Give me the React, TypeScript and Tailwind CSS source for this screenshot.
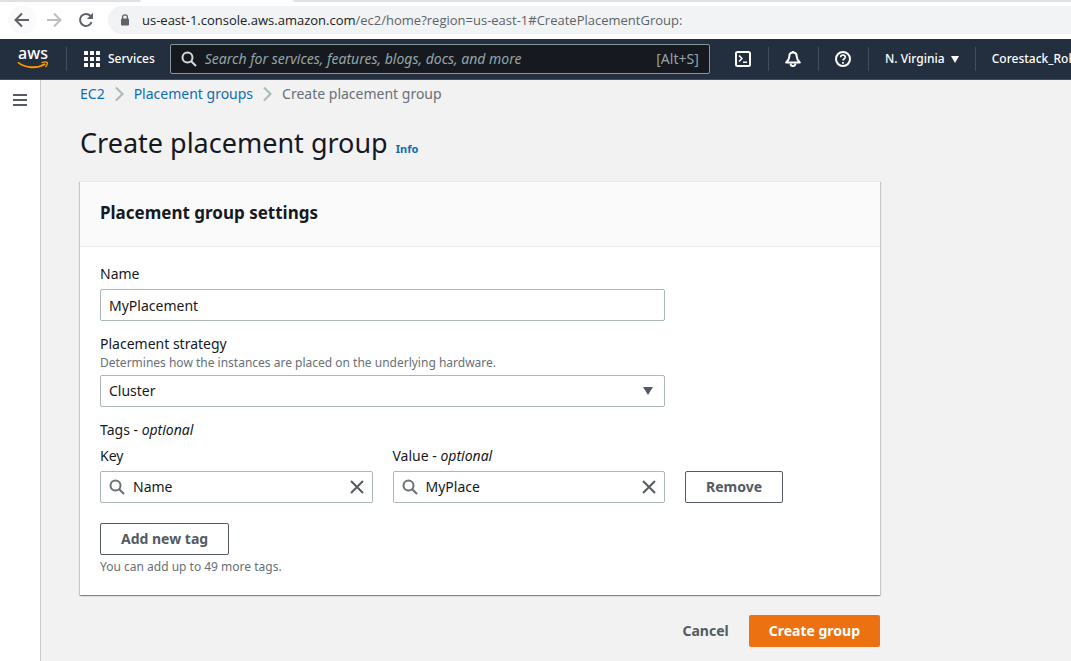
import { useState } from "react";
import type { ReactNode } from "react";

function SearchIcon({ className }: { className?: string }) {
  return (
    <svg viewBox="0 0 16 16" className={className} fill="none" stroke="currentColor" strokeWidth="2" aria-hidden="true">
      <circle cx="6.5" cy="6.5" r="5" />
      <path d="M10.2 10.2 15 15" />
    </svg>
  );
}

function BrowserBar() {
  return (
    <div className="h-[39px] bg-white flex flex-col">
      <div className="h-0.5 flex shrink-0">
        <div className="w-[141px] bg-[#dee1e6] rounded-br-sm" />
        <div className="w-[152px]" />
        <div className="flex-1 bg-[#dee1e6] rounded-bl-sm" />
      </div>
      <div className="flex-1 flex items-center pl-2 pb-px gap-1 text-[#5f6368]">
        <button type="button" aria-label="Back" className="size-7 rounded-full bg-[#fafafa] grid place-items-center">
          <svg viewBox="0 0 16 16" className="size-4" fill="none" stroke="currentColor" strokeWidth="2" aria-hidden="true">
            <path d="M15 8H2M8 1.5 1.5 8 8 14.5" />
          </svg>
        </button>
        <button type="button" aria-label="Forward" className="size-7 grid place-items-center text-[#bcbec0]">
          <svg viewBox="0 0 16 16" className="size-4" fill="none" stroke="currentColor" strokeWidth="2" aria-hidden="true">
            <path d="M1 8h13M8 1.5 14.5 8 8 14.5" />
          </svg>
        </button>
        <button type="button" aria-label="Reload" className="size-7 grid place-items-center">
          <svg viewBox="0 0 16 16" className="size-4" fill="none" stroke="currentColor" strokeWidth="2" aria-hidden="true">
            <path d="M13.6 10.2A6 6 0 1 1 12.4 3.8L14 5.4" />
            <path d="M15 .8V7H8.8z" fill="currentColor" stroke="none" />
          </svg>
        </button>
        <div className="flex-1 min-w-0 h-7 ml-1 pl-3 rounded-l-full bg-[#f1f3f4] flex items-center gap-3">
          <svg viewBox="0 0 10 12" className="w-2.5 h-3 shrink-0" aria-hidden="true">
            <path d="M2.6 5V3.2a2.4 2.4 0 0 1 4.8 0V5" fill="none" stroke="#5f6368" strokeWidth="1.3" />
            <rect x="1" y="4.4" width="8" height="7" rx="1" fill="#5f6368" />
          </svg>
          <span className="font-['Open_Sans','Noto_Sans',sans-serif] text-[13px] whitespace-nowrap overflow-hidden">
            <span className="text-[#202124]">us-east-1.console.aws.amazon.com</span>/ec2/home?region=us-east-1#CreatePlacementGroup:
          </span>
        </div>
      </div>
    </div>
  );
}

function NavIcon({ label, children }: { label: string; children: ReactNode }) {
  return (
    <button type="button" aria-label={label} className="w-[50px] h-6 shrink-0 grid place-items-center border-r border-[#414d5c]">
      <svg viewBox="0 0 16 16" className="size-4" fill="none" stroke="currentColor" strokeWidth="2" strokeLinejoin="round" aria-hidden="true">
        {children}
      </svg>
    </button>
  );
}

function ConsoleNav() {
  return (
    <nav className="h-[41px] bg-[#232f3e] border-b border-[#414d5c] text-white text-xs font-medium flex items-center overflow-hidden">
      <a href="#home" className="w-[67px] h-6 shrink-0 flex flex-col items-center border-r border-[#414d5c]">
        <span className="text-base leading-3 font-medium">aws</span>
        <svg viewBox="0 0 34 8" className="mt-0.5 w-8 h-2 shrink-0" fill="none" stroke="#f90" aria-hidden="true">
          <path d="M1 1.2C9 7.6 21.5 8 30 3" strokeWidth="2" />
          <path d="M26 1.5C29 .6 31.5 .7 32 1.3C32.5 2.2 31.6 4.600 30.200 6.300" strokeWidth="1.5" />
        </svg>
      </a>
      <button type="button" className="h-8 shrink-0 ml-[17px] mr-[15px] flex items-center gap-2">
        <svg viewBox="0 0 16 16" className="size-4" fill="currentColor" aria-hidden="true">
          {[0, 6, 12].map((y) => [0, 6, 12].map((x) => <rect key={`${x}-${y}`} x={x} y={y} width="4" height="4" rx="0.5" />))}
        </svg>
        <span>Services</span>
      </button>
      <label className="basis-[540px] min-w-0 h-[30px] flex items-center gap-2 px-2.5 bg-[#16191f] border border-[#879596] rounded-xs">
        <SearchIcon className="size-4 shrink-0 text-[#d5dbdb]" />
        <input
          type="text"
          aria-label="Search"
          placeholder="Search for services, features, blogs, docs, and more"
          className="flex-1 min-w-0 bg-transparent text-sm font-normal outline-none placeholder:italic placeholder:text-[#95a5a6]"
        />
        <span className="text-sm font-normal text-[#95a5a6]">[Alt+S]</span>
      </label>
      <div className="flex shrink-0 items-center ml-[9px]">
        <NavIcon label="CloudShell">
          <rect x="1" y="1" width="14" height="14" rx="1.5" />
          <path d="M4 4.5 7 7.5 4 10.5M8 11.2h4" strokeWidth="1.6" />
        </NavIcon>
        <NavIcon label="Notifications">
          <path d="M8 1.500C5 1.500 4.300 3.600 4.300 5.500C4.300 8 3.400 9.400 1.200 11.500H14.800C12.600 9.400 11.700 8 11.700 5.500C11.700 3.600 11 1.500 8 1.500ZM8 0V1.500" />
          <path d="M5.600 12.500C5.600 15.900 10.400 15.900 10.400 12.500" />
        </NavIcon>
        <NavIcon label="Help">
          <circle cx="8" cy="8" r="7" />
          <path d="M5.7 6.3C5.7 3.2 10.4 3.3 10.3 6.2C10.2 7.7 8 7.8 8 9.6M8 11v1.700" strokeWidth="1.7" />
        </NavIcon>
      </div>
      <button type="button" className="h-6 shrink-0 w-[107px] flex items-center justify-center gap-1.5 border-r border-[#414d5c]">
        N. Virginia
        <svg viewBox="0 0 8 7" className="w-2 h-[7px]" fill="currentColor" aria-hidden="true"><path d="M0 0h8L4 7z" /></svg>
      </button>
      <button type="button" className="flex-1 min-w-0 pl-4 text-left whitespace-nowrap">Corestack_Rol</button>
    </nav>
  );
}

function Chevron() {
  return (
    <svg viewBox="0 0 9 16" className="w-[9px] h-4" fill="none" stroke="#aab7b8" strokeWidth="2" aria-hidden="true">
      <path d="M1 1.5 7.5 8 1 14.5" />
    </svg>
  );
}

function TagField({ id, label, value, onChange, className }: {
  id: string;
  label: ReactNode;
  value: string;
  onChange: (v: string) => void;
  className?: string;
}) {
  return (
    <div className={className}>
      <label htmlFor={id} className="block mb-1">{label}</label>
      <div className="h-8 flex items-center gap-2 px-2 border border-[#aab7b8] rounded-xs text-[#545b64]">
        <SearchIcon className="size-4 shrink-0 text-[#687078]" />
        <input id={id} type="text" value={value} onChange={(e) => onChange(e.target.value)} className="flex-1 min-w-0 text-[#16191f] outline-none" />
        <button type="button" aria-label="Clear" onClick={() => onChange("")}>
          <svg viewBox="0 0 14 14" className="size-3.5" fill="none" stroke="currentColor" strokeWidth="2" aria-hidden="true">
            <path d="M1 1l12 12M13 1 1 13" />
          </svg>
        </button>
      </div>
    </div>
  );
}

const outlined = "h-8 px-5 border border-[#545b64] rounded-xs font-bold text-[#545b64] whitespace-nowrap";

export default function App() {
  const [name, setName] = useState("MyPlacement");
  const [tagKey, setTagKey] = useState("Name");
  const [tagValue, setTagValue] = useState("MyPlace");

  return (
    <div className="min-h-screen flex flex-col bg-[#f2f2f2] font-['Noto_Sans','Open_Sans',sans-serif] text-sm leading-[22px] text-[#16191f]">
      <BrowserBar />
      <ConsoleNav />
      <div className="flex-1 flex">
        <aside className="w-[41px] shrink-0 bg-white border-r border-[#c6cacb]">
          <button type="button" aria-label="Open navigation" className="w-10 h-10 grid place-items-center text-[#545b64]">
            <svg viewBox="0 0 14 12" className="w-3.5 h-3" stroke="currentColor" strokeWidth="2" aria-hidden="true">
              <path d="M0 1h14M0 6h14M0 11h14" />
            </svg>
          </button>
        </aside>
        <main className="flex-1 min-w-0 pl-[39px] pr-10 pt-[3px]">
          <div className="max-w-[800px]">
            <nav aria-label="Breadcrumbs" className="flex items-center gap-2.5 text-[#687078]">
              <a href="#ec2" className="text-[#0f6cb6]">EC2</a>
              <Chevron />
              <a href="#groups" className="text-[#0f6cb6]">Placement groups</a>
              <Chevron />
              <span>Create placement group</span>
            </nav>
            <div className="my-5 flex items-baseline gap-2">
              <h1 className="text-[27px] leading-9">Create placement group</h1>
              <a href="#info" className="text-[11px] font-bold text-[#0f6cb6]">Info</a>
            </div>
            <section className="bg-white border-t border-[#eaeded] shadow-[0_1px_1px_rgba(0,28,36,0.3),1px_1px_1px_rgba(0,28,36,0.15),-1px_1px_1px_rgba(0,28,36,0.15)]">
              <h2 className="h-[65px] px-5 pb-0.5 flex items-center bg-[#fafafa] border-b border-[#eaeded] text-[17px] font-bold">Placement group settings</h2>
              <div className="px-5 pt-4 pb-5">
                <div className="grid grid-cols-8 gap-x-5 gap-y-3">
                  <div className="col-span-6">
                    <label htmlFor="name" className="block mb-1">Name</label>
                    <input id="name" type="text" value={name} onChange={(e) => setName(e.target.value)} className="w-full h-8 px-2 border border-[#aab7b8] rounded-xs outline-none" />
                  </div>
                  <div className="col-span-6">
                    <label htmlFor="strategy" className="block">Placement strategy</label>
                    <p id="strategy-hint" className="mb-1 text-xs leading-4 text-[#687078]">Determines how the instances are placed on the underlying hardware.</p>
                    <div className="relative">
                      <select id="strategy" aria-describedby="strategy-hint" defaultValue="Cluster" className="block w-full h-8 px-2 appearance-none bg-white border border-[#aab7b8] rounded-xs outline-none">
                        <option>Cluster</option>
                      </select>
                      <svg viewBox="0 0 10 8" className="absolute right-3 top-3 w-2.5 h-2 pointer-events-none" fill="#545b64" aria-hidden="true"><path d="M0 0h10L5 8z" /></svg>
                    </div>
                  </div>
                </div>
                <h3 className="mt-3 mb-1">Tags - <em>optional</em></h3>
                <div className="grid grid-cols-8 gap-x-5 items-end">
                  <TagField id="tag-key" label="Key" value={tagKey} onChange={setTagKey} className="col-span-3" />
                  <TagField id="tag-value" label={<>Value - <em>optional</em></>} value={tagValue} onChange={setTagValue} className="col-span-3" />
                  <div className="col-span-2"><button type="button" className={outlined}>Remove</button></div>
                </div>
                <button type="button" className={`mt-5 mb-1 block ${outlined}`}>Add new tag</button>
                <p className="text-xs leading-4 text-[#687078]">You can add up to 49 more tags.</p>
              </div>
            </section>
            <div className="mt-5 flex justify-end items-center font-bold">
              <button type="button" className="h-8 px-5 text-[#545b64]">Cancel</button>
              <button type="button" className="h-8 px-5 rounded-xs bg-[#ec7211] text-white">Create group</button>
            </div>
          </div>
        </main>
      </div>
    </div>
  );
}
